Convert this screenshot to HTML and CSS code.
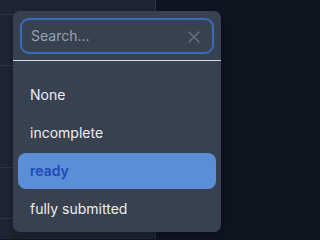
FILE: index.html
```html
<!DOCTYPE html>
<html>
<head>
<meta charset="utf-8">
<link rel="stylesheet" href="styles.css">
</head>
<body>
<div class="page">
  <div class="table">
    <div class="row r1"></div>
    <div class="row r2"></div>
    <div class="row r3"></div>
    <div class="row r4"></div>
    <div class="row r5"></div>
  </div>
  <div class="side"></div>
</div>
<div class="popover">
  <div class="search">
    <span class="placeholder">Search...</span>
    <svg class="clear" width="12" height="12" viewBox="0 0 12 12"><path d="M1 1L11 11M11 1L1 11" stroke="#6b7280" stroke-width="1.4" stroke-linecap="round" fill="none"/></svg>
  </div>
  <div class="sep"></div>
  <ul class="list">
    <li class="item">None</li>
    <li class="item">incomplete</li>
    <li class="item active">ready</li>
    <li class="item">fully submitted</li>
  </ul>
</div>
</body>
</html>
```
FILE: styles.css
```css
* { box-sizing: border-box; }
html, body { margin: 0; padding: 0; }
body {
  width: 233px;
  height: 239px;
  overflow: hidden;
  background: #0f1421;
  font-family: Inter, "Noto Sans", sans-serif;
  position: relative;
}
.page {
  display: flex;
  height: 239px;
}
.table {
  width: 156px;
  height: 239px;
  background: #1e2431;
  border-right: 1px solid #2c3340;
  display: flex;
  flex-direction: column;
}
.row { border-bottom: 1px solid #2e3541; flex: none; }
.r1 { height: 15px; }
.r2 { height: 51px; }
.r3 { height: 102px; }
.r4 { height: 51px; }
.r5 { flex: 1; border-bottom: none; }
.side { flex: 1; background: #0f1421; }

.popover {
  position: absolute;
  left: 13px;
  top: 11px;
  width: 208px;
  height: 221px;
  background: #384150;
  border-radius: 7px;
  display: flex;
  flex-direction: column;
  box-shadow: 0 4px 10px rgba(0,0,0,0.25);
}
.search {
  margin: 7px 7px 0 7px;
  height: 36px;
  border: 2px solid #3a6cc0;
  border-radius: 9px;
  display: flex;
  align-items: center;
  padding: 0 12px 0 9px;
}
.placeholder {
  flex: 1;
  color: #9aa1ad;
  font-size: 14px;
  line-height: 20px;
}
.clear { display: block; margin-top: 1px; }
.sep {
  margin-top: 6px;
  height: 1px;
  background: #d8dbe0;
}
.list {
  list-style: none;
  margin: 0;
  padding: 16px 5px 5px 5px;
  display: flex;
  flex-direction: column;
  gap: 2px;
}
.item {
  height: 36px;
  line-height: 36px;
  padding: 0 12px;
  font-size: 14px;
  color: #eceef1;
  border-radius: 8px;
}
.item.active {
  background: #5a8ed6;
  color: #2149b8;
  font-weight: 600;
}
```
